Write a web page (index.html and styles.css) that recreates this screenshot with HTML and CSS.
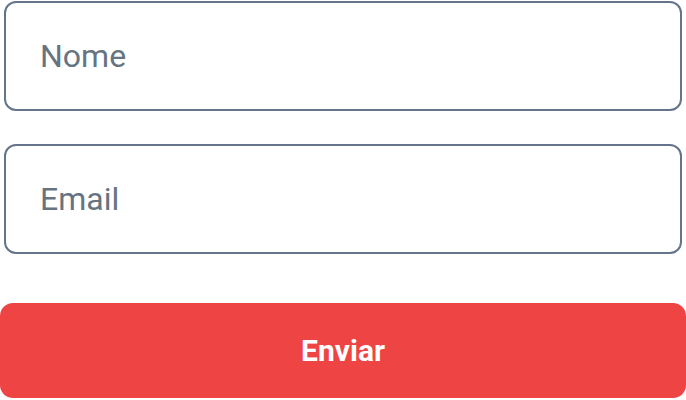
FILE: index.html
```html
<!DOCTYPE html>
<html lang="pt">
<head>
<meta charset="utf-8">
<link rel="stylesheet" href="styles.css">
</head>
<body>
<form class="form">
  <input class="field" type="text" placeholder="Nome">
  <input class="field" type="email" placeholder="Email">
  <button class="submit" type="button">Enviar</button>
</form>
</body>
</html>
```
FILE: styles.css
```css
html, body {
  margin: 0;
  padding: 0;
  background: #ffffff;
}
.form {
  display: flex;
  flex-direction: column;
  padding-top: 1px;
}
.field {
  box-sizing: border-box;
  height: 110px;
  margin: 0 4px 33px 4px;
  border: 2px solid #64748b;
  border-radius: 12px;
  padding: 0 34px;
  font-family: Roboto, "Liberation Sans", sans-serif;
  font-size: 32px;
  color: #334155;
  background: #fff;
  outline: none;
}
.field::placeholder {
  color: #667482;
  opacity: 1;
}
.field + .field {
  margin-bottom: 49px;
}
.submit {
  box-sizing: border-box;
  height: 95px;
  width: 100%;
  border: none;
  border-radius: 13px;
  background: #ef4444;
  color: #ffffff;
  font-family: Roboto, "Liberation Sans", sans-serif;
  font-weight: 700;
  font-size: 30px;
  padding: 0;
  cursor: pointer;
}
```
